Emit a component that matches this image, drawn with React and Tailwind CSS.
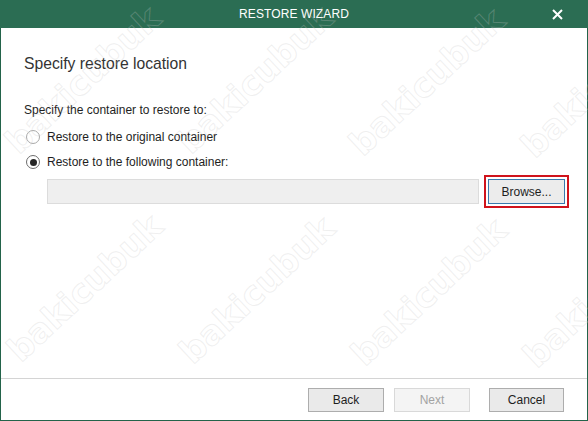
const marks = [
  "left-[83px] top-[80px]",
  "left-[255px] top-[80px]",
  "left-[427px] top-[82px]",
  "left-[599px] top-[84px]",
  "left-[85px] top-[288px]",
  "left-[257px] top-[290px]",
  "left-[429px] top-[292px]",
  "left-[601px] top-[294px]",
];

function Radio({ checked, label }) {
  return (
    <div className="flex h-[20px] items-center">
      <span
        className={
          checked
            ? "ml-[2px] flex h-[14px] w-[14px] items-center justify-center rounded-full border border-[#6d6d6d] bg-white"
            : "ml-[2px] flex h-[14px] w-[14px] items-center justify-center rounded-full border border-[#a9a9a9] bg-white"
        }
      >
        {checked && <span className="h-[7px] w-[7px] rounded-full bg-[#262626]" />}
      </span>
      <span className="ml-[7px]">{label}</span>
    </div>
  );
}

export default function App() {
  return (
    <div className="relative flex h-[421px] w-[588px] flex-col overflow-hidden bg-white font-['Liberation_Sans',Arial,sans-serif] text-[12px] text-[#1e1e1e]">
      {/* Title bar */}
      <div className="relative flex h-[28px] shrink-0 items-center justify-center bg-[#2b6d53] text-white">
        <span className="tracking-[0.1px]">RESTORE WIZARD</span>
        <svg
          className="absolute right-[25px] top-[9px]"
          width="11"
          height="11"
          viewBox="0 0 11 11"
          fill="none"
          stroke="white"
          strokeWidth="2"
        >
          <path d="M1 1L10 10M10 1L1 10" />
        </svg>
      </div>

      {/* Body */}
      <div className="flex flex-1 flex-col border-x border-b border-[#23634a]">
        <div className="flex flex-1 flex-col pl-[23px]">
          <h2 className="mt-[26px] h-[20px] text-[15.7px] leading-[20px] text-[#333]">
            Specify restore location
          </h2>

          <p className="mt-[28px] h-[16px] leading-[16px]">Specify the container to restore to:</p>

          <div className="mt-[9px]">
            <Radio label="Restore to the original container" />
          </div>
          <div className="mt-[5px]">
            <Radio checked label="Restore to the following container:" />
          </div>

          <div className="mt-[3px] flex items-center">
            <div className="ml-[23px] h-[25px] w-[432px] border border-[#dcdcdc] bg-[#efefef]" />
            <div className="ml-[5px] border-2 border-[#d0131c] p-[2px]">
              <button className="flex h-[25px] w-[77px] items-center justify-center border border-[#3a79ad] bg-[#ececec] text-[#1e1e1e]">
                Browse...
              </button>
            </div>
          </div>
        </div>

        {/* Footer */}
        <div className="flex h-[42px] shrink-0 items-start justify-end border-t border-[#d4d4d4] pr-[23px] pt-[9px]">
          <button className="flex h-[24px] w-[76px] items-center justify-center border border-[#adadad] bg-[#eaeaea] text-[#1e1e1e]">
            Back
          </button>
          <button className="ml-[10px] flex h-[24px] w-[76px] items-center justify-center border border-[#d9d9d9] bg-[#f4f4f4] text-[#a3a3a3]">
            Next
          </button>
          <button className="ml-[19px] flex h-[24px] w-[75px] items-center justify-center border border-[#adadad] bg-[#eaeaea] text-[#1e1e1e]">
            Cancel
          </button>
        </div>
      </div>

      {/* Watermark */}
      <div className="pointer-events-none absolute inset-0 overflow-hidden">
        {marks.map((pos) => (
          <span
            key={pos}
            className={
              "absolute -translate-x-1/2 -translate-y-1/2 -rotate-[43deg] whitespace-nowrap font-['DejaVu_Sans',sans-serif] text-[34px] font-bold text-transparent [-webkit-text-stroke:1px_rgba(200,200,200,0.28)] " +
              pos
            }
          >
            bakicubuk
          </span>
        ))}
      </div>
    </div>
  );
}
